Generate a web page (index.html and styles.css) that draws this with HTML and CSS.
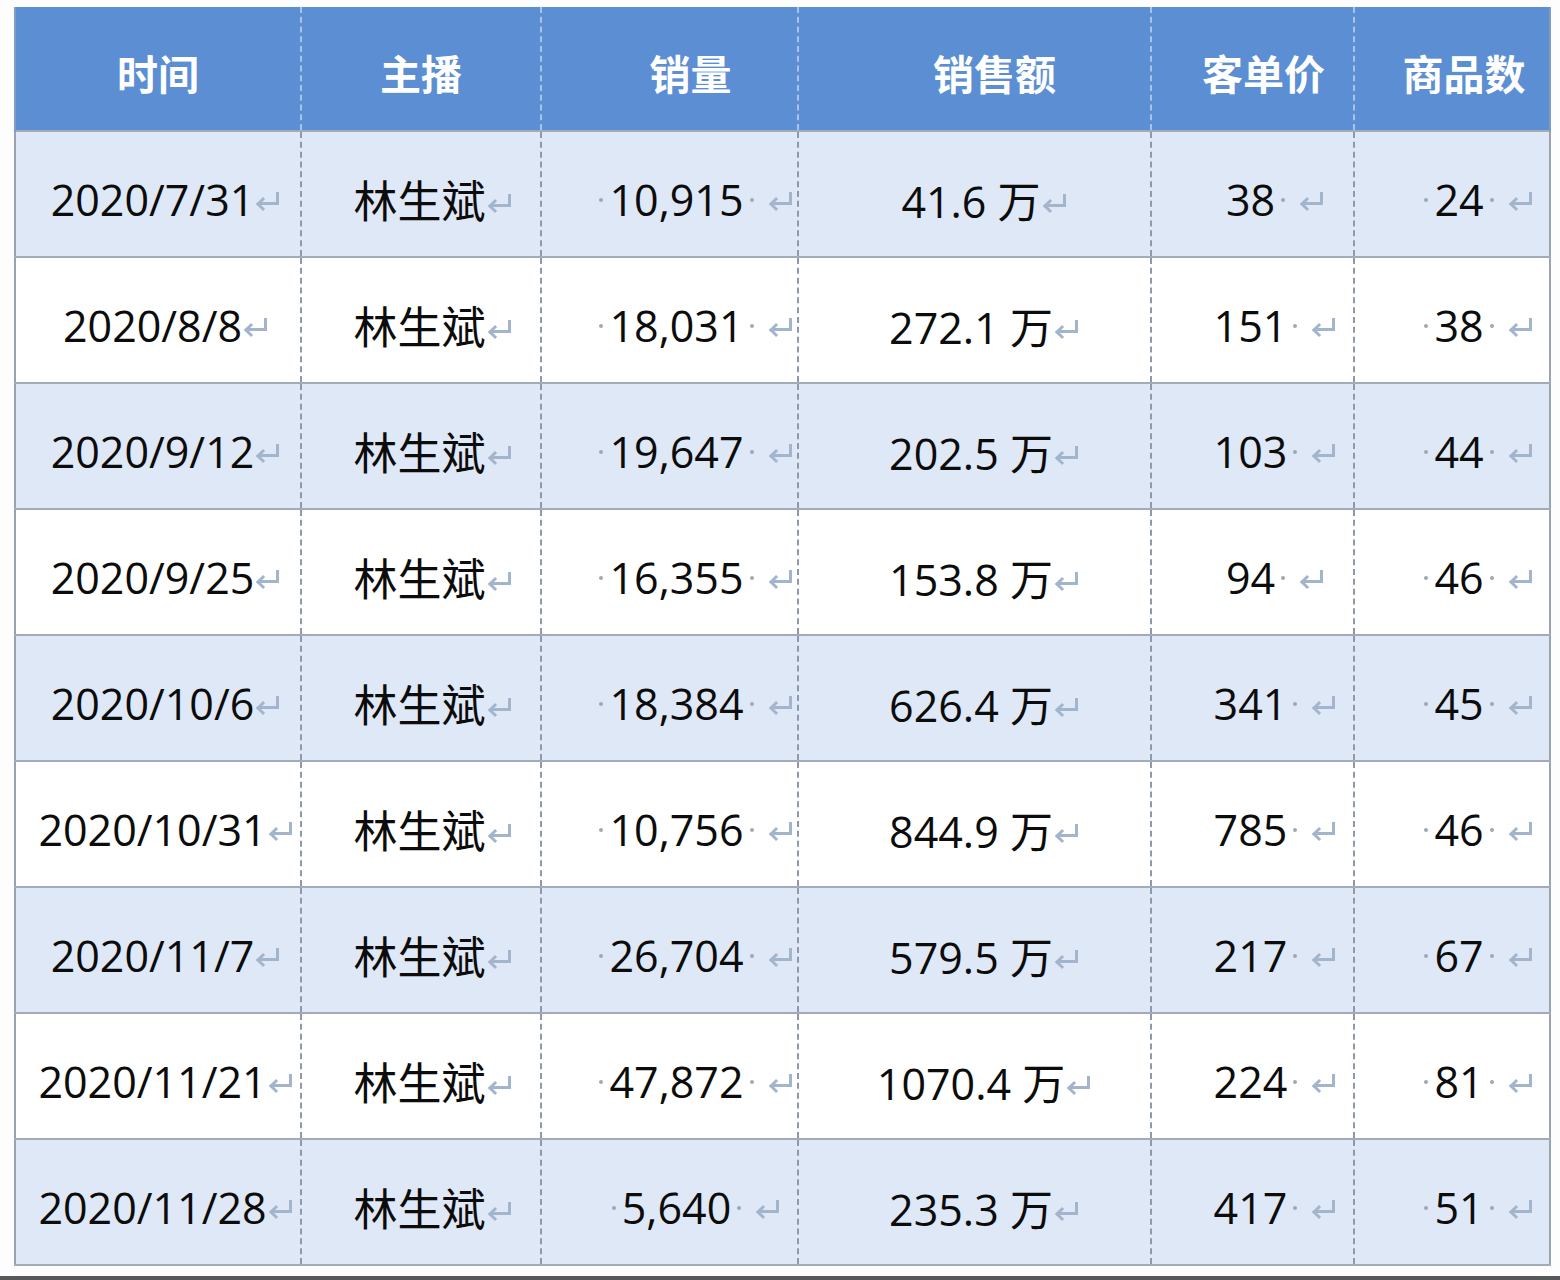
FILE: index.html
```html
<!DOCTYPE html>
<html lang="zh-CN">
<head>
<meta charset="utf-8">
<title>林生斌 直播数据</title>
<link rel="stylesheet" href="styles.css">
</head>
<body>
<div class="sheet">
<table class="data">
  <colgroup>
    <col class="c1"><col class="c2"><col class="c3"><col class="c4"><col class="c5"><col class="c6">
  </colgroup>
  <thead>
    <tr>
      <th class="k1">时间</th>
      <th class="k2">主播</th>
      <th class="k3">销量</th>
      <th class="k4">销售额</th>
      <th class="k5">客单价</th>
      <th class="k6">商品数</th>
    </tr>
  </thead>
  <tbody>
    <tr class="alt">
      <td class="k1">2020/7/31<i class="ret"></i></td>
      <td class="k2">林生斌<i class="ret"></i></td>
      <td class="k3"><b class="dot"></b>10,915<b class="dot"></b><i class="ret wide"></i></td>
      <td class="k4">41.6 万<i class="ret"></i></td>
      <td class="k5">38<b class="dot"></b><i class="ret wide"></i></td>
      <td class="k6"><b class="dot"></b>24<b class="dot"></b><i class="ret wide"></i></td>
    </tr>
    <tr>
      <td class="k1">2020/8/8<i class="ret"></i></td>
      <td class="k2">林生斌<i class="ret"></i></td>
      <td class="k3"><b class="dot"></b>18,031<b class="dot"></b><i class="ret wide"></i></td>
      <td class="k4">272.1 万<i class="ret"></i></td>
      <td class="k5">151<b class="dot"></b><i class="ret wide"></i></td>
      <td class="k6"><b class="dot"></b>38<b class="dot"></b><i class="ret wide"></i></td>
    </tr>
    <tr class="alt">
      <td class="k1">2020/9/12<i class="ret"></i></td>
      <td class="k2">林生斌<i class="ret"></i></td>
      <td class="k3"><b class="dot"></b>19,647<b class="dot"></b><i class="ret wide"></i></td>
      <td class="k4">202.5 万<i class="ret"></i></td>
      <td class="k5">103<b class="dot"></b><i class="ret wide"></i></td>
      <td class="k6"><b class="dot"></b>44<b class="dot"></b><i class="ret wide"></i></td>
    </tr>
    <tr>
      <td class="k1">2020/9/25<i class="ret"></i></td>
      <td class="k2">林生斌<i class="ret"></i></td>
      <td class="k3"><b class="dot"></b>16,355<b class="dot"></b><i class="ret wide"></i></td>
      <td class="k4">153.8 万<i class="ret"></i></td>
      <td class="k5">94<b class="dot"></b><i class="ret wide"></i></td>
      <td class="k6"><b class="dot"></b>46<b class="dot"></b><i class="ret wide"></i></td>
    </tr>
    <tr class="alt">
      <td class="k1">2020/10/6<i class="ret"></i></td>
      <td class="k2">林生斌<i class="ret"></i></td>
      <td class="k3"><b class="dot"></b>18,384<b class="dot"></b><i class="ret wide"></i></td>
      <td class="k4">626.4 万<i class="ret"></i></td>
      <td class="k5">341<b class="dot"></b><i class="ret wide"></i></td>
      <td class="k6"><b class="dot"></b>45<b class="dot"></b><i class="ret wide"></i></td>
    </tr>
    <tr>
      <td class="k1">2020/10/31<i class="ret"></i></td>
      <td class="k2">林生斌<i class="ret"></i></td>
      <td class="k3"><b class="dot"></b>10,756<b class="dot"></b><i class="ret wide"></i></td>
      <td class="k4">844.9 万<i class="ret"></i></td>
      <td class="k5">785<b class="dot"></b><i class="ret wide"></i></td>
      <td class="k6"><b class="dot"></b>46<b class="dot"></b><i class="ret wide"></i></td>
    </tr>
    <tr class="alt">
      <td class="k1">2020/11/7<i class="ret"></i></td>
      <td class="k2">林生斌<i class="ret"></i></td>
      <td class="k3"><b class="dot"></b>26,704<b class="dot"></b><i class="ret wide"></i></td>
      <td class="k4">579.5 万<i class="ret"></i></td>
      <td class="k5">217<b class="dot"></b><i class="ret wide"></i></td>
      <td class="k6"><b class="dot"></b>67<b class="dot"></b><i class="ret wide"></i></td>
    </tr>
    <tr>
      <td class="k1">2020/11/21<i class="ret"></i></td>
      <td class="k2">林生斌<i class="ret"></i></td>
      <td class="k3"><b class="dot"></b>47,872<b class="dot"></b><i class="ret wide"></i></td>
      <td class="k4">1070.4 万<i class="ret"></i></td>
      <td class="k5">224<b class="dot"></b><i class="ret wide"></i></td>
      <td class="k6"><b class="dot"></b>81<b class="dot"></b><i class="ret wide"></i></td>
    </tr>
    <tr class="alt">
      <td class="k1">2020/11/28<i class="ret"></i></td>
      <td class="k2">林生斌<i class="ret"></i></td>
      <td class="k3"><b class="dot"></b>5,640<b class="dot"></b><i class="ret wide"></i></td>
      <td class="k4">235.3 万<i class="ret"></i></td>
      <td class="k5">417<b class="dot"></b><i class="ret wide"></i></td>
      <td class="k6"><b class="dot"></b>51<b class="dot"></b><i class="ret wide"></i></td>
    </tr>
  </tbody>
</table>
<div class="bottombar"></div>
</div>
</body>
</html>
```
FILE: styles.css
```css
html, body {
  margin: 0;
  padding: 0;
  background: #fdfdfe;
}
body {
  width: 1560px;
  height: 1280px;
  overflow: hidden;
  font-family: "Open Sans", "Noto Sans CJK SC", sans-serif;
}
.sheet {
  padding: 7px 0 0 14px;
  display: flex;
  flex-direction: column;
}
.data {
  border-collapse: collapse;
  table-layout: fixed;
  width: 1535px;
  color: #0c0c0c;
}
.c1 { width: 286px; }
.c2 { width: 240px; }
.c3 { width: 257px; }
.c4 { width: 353px; }
.c5 { width: 203px; }
.c6 { width: 196px; }

.data th {
  height: 124px;
  padding: 6px 0 0 0;
  box-sizing: border-box;
  background: #5b8ed2;
  color: #ffffff;
  font-family: "Noto Sans CJK SC", sans-serif;
  font-weight: 700;
  font-size: 41px;
  text-align: center;
  border-left: 2px dashed #a9c3ea;
}
.data th:first-child { border-left: 2px solid #7f9cc6; }
.data th:last-child { border-right: 2px solid #7f9cc6; }

.data th.k3 { padding-left: 42px; }
.data th.k4 { padding-left: 40px; }
.data th.k5 { padding-left: 22px; }
.data th.k6 { padding-left: 24px; }

.data td {
  height: 126px;
  box-sizing: border-box;
  padding: 10px 0 0 0;
  font-size: 43px;
  font-weight: 400;
  text-align: center;
  white-space: nowrap;
  border-left: 2px dashed #8e99ab;
  border-bottom: 2px solid #a3aab8;
  background: #ffffff;
}
.data td:first-child { border-left: 2px solid #9ba3b2; }
.data td:last-child { border-right: 2px solid #9ba3b2; }
.data tr.alt td { background: #dfe8f6; }
.data tbody tr:first-child td { border-top: 2px solid #a3aab8; }

.data td.k1 { padding-left: 16px; }
.data td.k2 { padding-left: 24px; font-family: "Noto Sans CJK SC", sans-serif; font-size: 44px; }
.data td.k3 { padding-left: 48px; }
.data td.k4 { padding-left: 20px; }
.data td.k5 { padding-left: 46px; }
.data td.k6 { padding-left: 48px; }

.ret {
  display: inline-block;
  width: 26px;
  height: 18px;
  margin-left: 1px;
  vertical-align: 6px;
  position: relative;
}
.ret::before {
  content: "";
  position: absolute;
  right: 2px;
  top: 0;
  width: 17px;
  height: 10px;
  border-right: 3px solid #a2b5cd;
  border-bottom: 3px solid #a2b5cd;
}
.ret::after {
  content: "";
  position: absolute;
  left: 3px;
  top: 7px;
  width: 7px;
  height: 7px;
  border-left: 3px solid #a2b5cd;
  border-bottom: 3px solid #a2b5cd;
  transform: rotate(45deg);
}
.ret.wide { margin-left: 8px; }

.dot {
  display: inline-block;
  width: 4px;
  height: 4px;
  border-radius: 50%;
  background: #a0a8b2;
  margin: 0 6px;
  vertical-align: 14px;
}

.bottombar {
  margin: 10px 0 0 -14px;
  height: 4px;
  background: #56585c;
}
```
